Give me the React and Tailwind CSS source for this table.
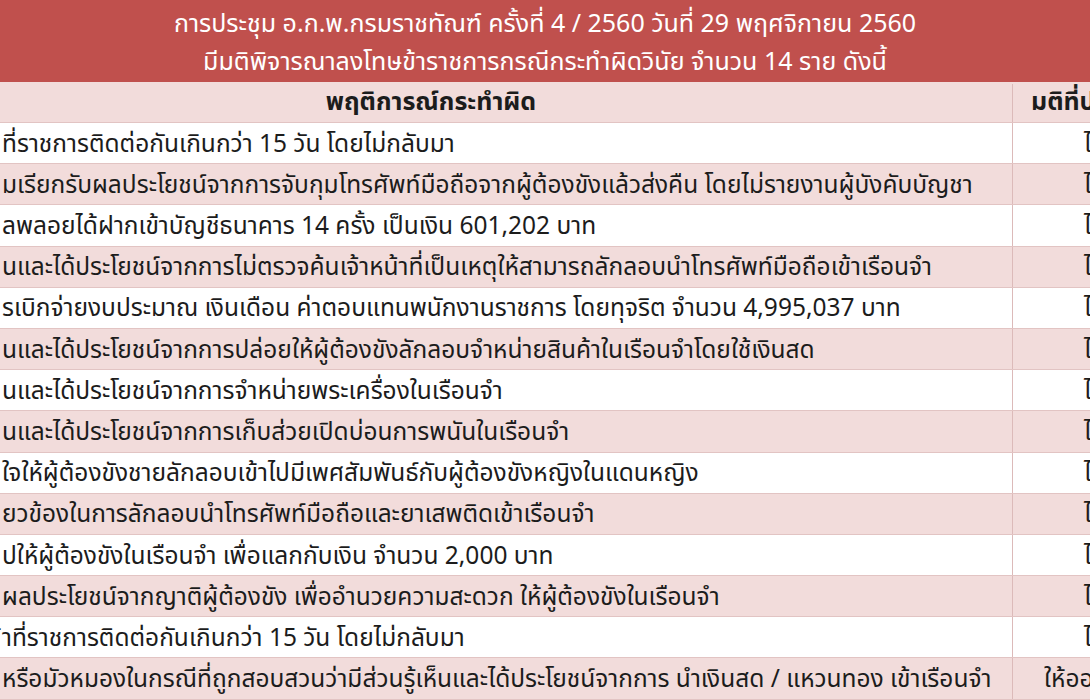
import React from "react";

const rows = [
  { t: "ที่ราชการติดต่อกันเกินกว่า 15 วัน โดยไม่กลับมา", m: "ไล่ออก" },
  { t: "มเรียกรับผลประโยชน์จากการจับกุมโทรศัพท์มือถือจากผู้ต้องขังแล้วส่งคืน โดยไม่รายงานผู้บังคับบัญชา", m: "ไล่ออก" },
  { t: "ลพลอยได้ฝากเข้าบัญชีธนาคาร 14 ครั้ง เป็นเงิน 601,202 บาท", m: "ไล่ออก" },
  { t: "นและได้ประโยชน์จากการไม่ตรวจค้นเจ้าหน้าที่เป็นเหตุให้สามารถลักลอบนำโทรศัพท์มือถือเข้าเรือนจำ", m: "ไล่ออก" },
  { t: "รเบิกจ่ายงบประมาณ เงินเดือน ค่าตอบแทนพนักงานราชการ โดยทุจริต จำนวน 4,995,037 บาท", m: "ไล่ออก" },
  { t: "นและได้ประโยชน์จากการปล่อยให้ผู้ต้องขังลักลอบจำหน่ายสินค้าในเรือนจำโดยใช้เงินสด", m: "ไล่ออก" },
  { t: "นและได้ประโยชน์จากการจำหน่ายพระเครื่องในเรือนจำ", m: "ไล่ออก" },
  { t: "นและได้ประโยชน์จากการเก็บส่วยเปิดบ่อนการพนันในเรือนจำ", m: "ไล่ออก" },
  { t: "ใจให้ผู้ต้องขังชายลักลอบเข้าไปมีเพศสัมพันธ์กับผู้ต้องขังหญิงในแดนหญิง", m: "ไล่ออก" },
  { t: "ยวข้องในการลักลอบนำโทรศัพท์มือถือและยาเสพติดเข้าเรือนจำ", m: "ไล่ออก" },
  { t: "ปให้ผู้ต้องขังในเรือนจำ เพื่อแลกกับเงิน จำนวน 2,000 บาท", m: "ไล่ออก" },
  { t: "ผลประโยชน์จากญาติผู้ต้องขัง เพื่ออำนวยความสะดวก ให้ผู้ต้องขังในเรือนจำ", m: "ไล่ออก" },
  { t: "้าที่ราชการติดต่อกันเกินกว่า 15 วัน โดยไม่กลับมา", m: "ไล่ออก" },
  { t: "หรือมัวหมองในกรณีที่ถูกสอบสวนว่ามีส่วนรู้เห็นและได้ประโยชน์จากการ นำเงินสด / แหวนทอง เข้าเรือนจำ", m: "ให้ออกจากราชการ", last: true },
];

export default function App() {
  return (
    <div
      className="w-[1090px] h-[700px] overflow-hidden bg-white text-[#1c1c1c]"
      style={{ fontFamily: "'Noto Sans Thai', 'Noto Sans', Tahoma, sans-serif" }}
    >
      <div className="h-[82px] pt-[3px] bg-[#c0504d] text-white text-[25px] leading-[38px] flex flex-col justify-center items-center">
        <div>การประชุม อ.ก.พ.กรมราชทัณฑ์ ครั้งที่ 4 / 2560 วันที่ 29 พฤศจิกายน 2560</div>
        <div>มีมติพิจารณาลงโทษข้าราชการกรณีกระทำผิดวินัย จำนวน 14 ราย ดังนี้</div>
      </div>
      <div className="w-[1300px]">
        <div className="flex h-[41px] pt-[2px] bg-[#f2dcdb] border-b border-[#e2c4c3] text-[25px] font-bold">
          <div className="w-[1012px] shrink-0 flex items-center justify-center">
            <span className="ml-[-150px]">พฤติการณ์กระทำผิด</span>
          </div>
          <div className="flex-1 border-l border-[#dcbab9] flex items-center pl-[18px]">มติที่ประชุม</div>
        </div>
        {rows.map((r, i) => (
          <div
            key={i}
            className={`flex h-[41.2px] border-b border-[#e2c4c3] text-[24.5px] ${i % 2 === 1 ? "bg-[#f2dcdb]" : "bg-white"}`}
          >
            <div className="w-[1012px] shrink-0 flex items-center pl-[2px] pt-[4px] whitespace-nowrap overflow-hidden">{r.t}</div>
            <div className={`flex-1 border-l border-[#dcbab9] flex items-center pt-[4px] whitespace-nowrap ${r.last ? "pl-[31px]" : "pl-[71px]"}`}>
              {r.m}
            </div>
          </div>
        ))}
      </div>
    </div>
  );
}
